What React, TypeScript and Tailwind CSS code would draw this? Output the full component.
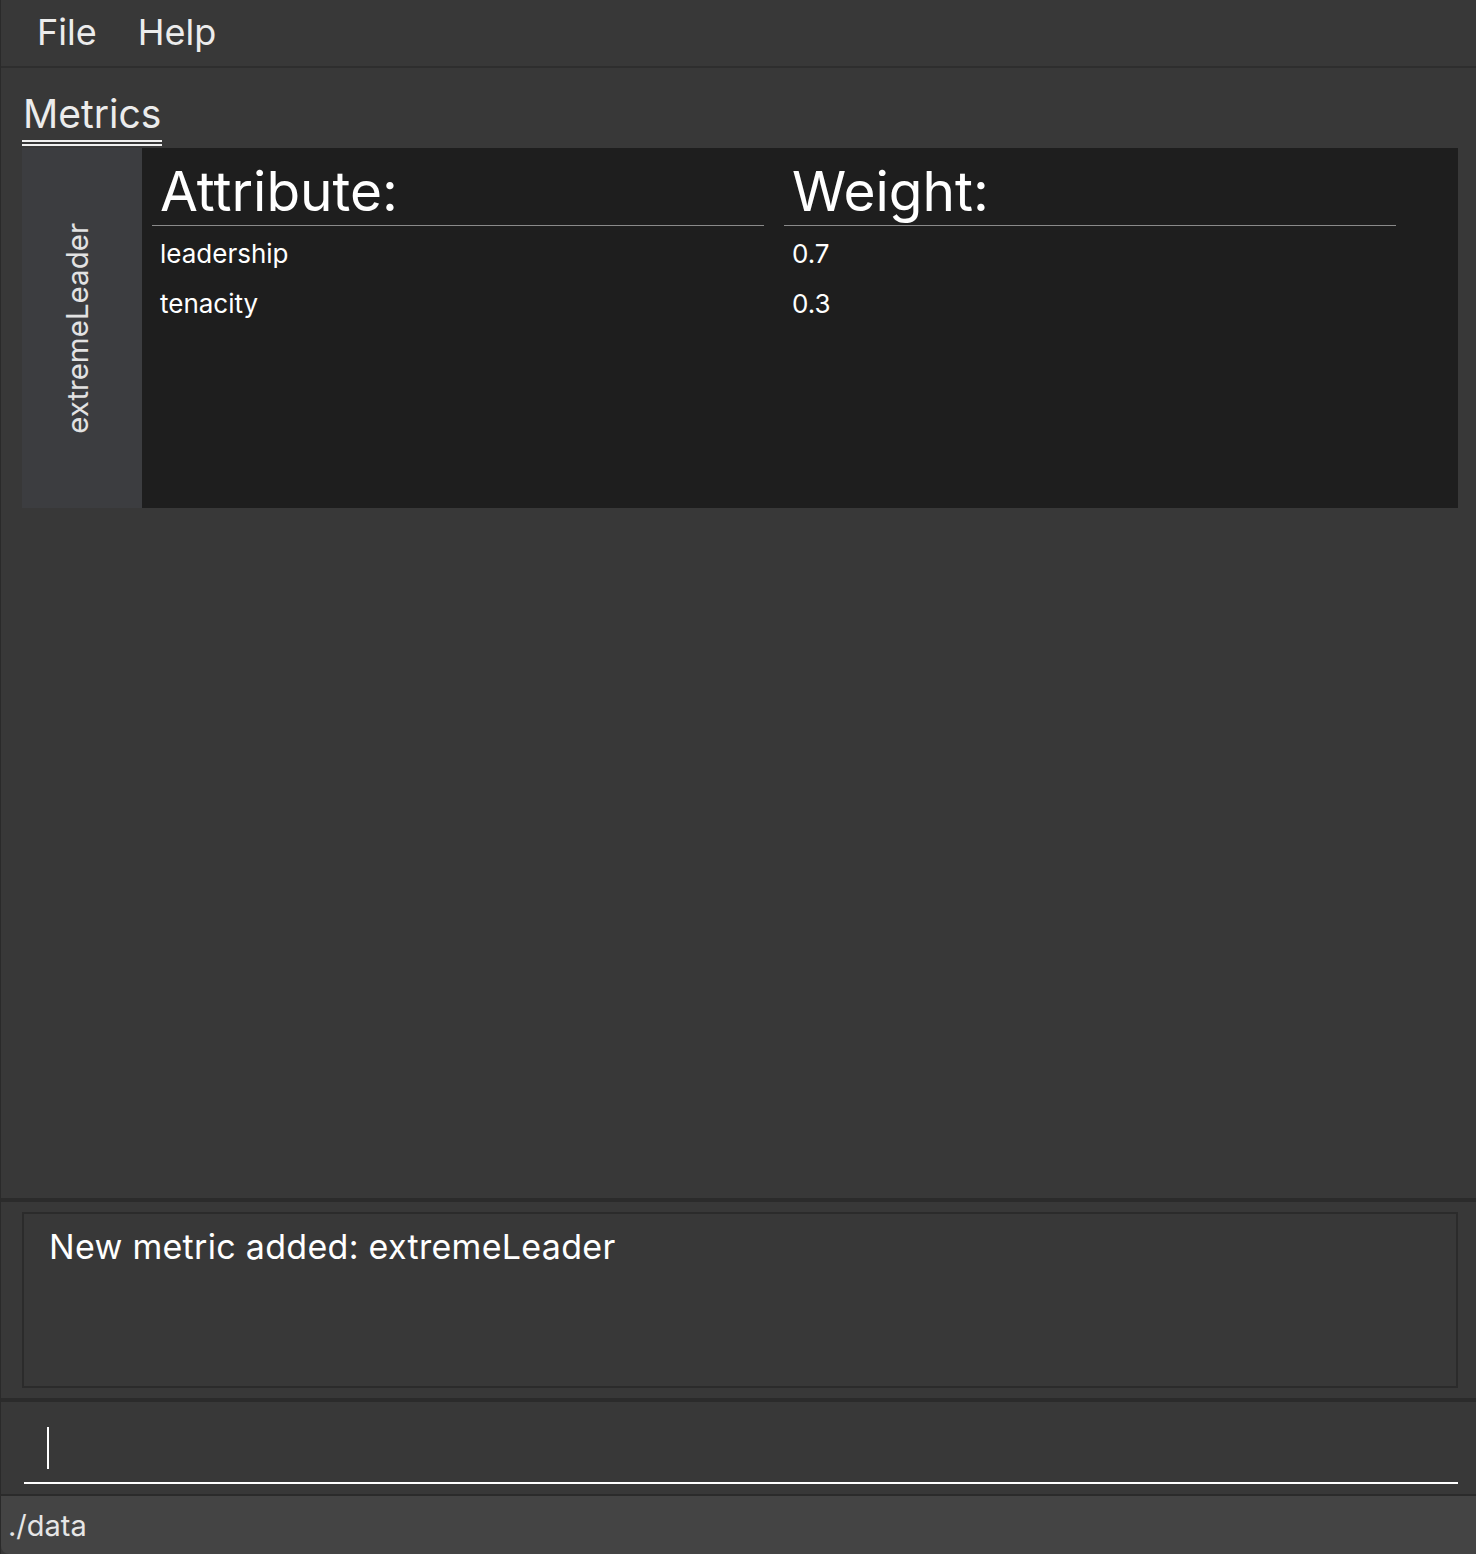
const rows = [
  { attr: 'leadership', weight: '0.7' },
  { attr: 'tenacity', weight: '0.3' },
];

const font = "font-['Inter','Liberation_Sans',sans-serif]";

export default function App() {
  return (
    <div className={`flex h-[1554px] w-[1476px] flex-col overflow-hidden border-l border-[#2a2a2a] bg-[#383838] ${font}`}>
      {/* menu bar */}
      <div className="flex h-[68px] shrink-0 items-center gap-[41px] border-b-2 border-[#2e2e2e] pb-[2px] pl-[36px] text-[36px] leading-none text-[#ececec]">
        <span>File</span>
        <span>Help</span>
      </div>

      {/* metrics list */}
      <div className="flex h-[1130px] shrink-0 flex-col pl-[21px] pr-[18px]">
        <div className="mt-[26px] self-start border-b-[6px] border-double border-[#f0f0f0] px-[1px] pb-[7px] text-[39px] leading-none text-[#ececec]">
          Metrics
        </div>
        <div className="mt-[2px] flex h-[360px]">
          <div className="flex w-[120px] shrink-0 items-center justify-center bg-[#3c3d40] pr-[8px]">
            <span className="rotate-180 text-[29.5px] leading-none text-[#e2e2e2] [writing-mode:vertical-rl]">
              extremeLeader
            </span>
          </div>
          <div className="flex flex-1 gap-[20px] bg-[#1e1e1e] pl-[10px] pt-4">
            {(['attr', 'weight'] as const).map((key) => (
              <div key={key} className="w-[612px]">
                <div className="border-b border-[#8a8a8a] pb-[6px] pl-[8px] text-[55px] leading-none text-white">
                  {key === 'attr' ? 'Attribute:' : 'Weight:'}
                </div>
                <div className="mt-[3px]">
                  {rows.map((r) => (
                    <div key={r.attr} className="h-[50px] pl-[8px] text-[26px] leading-[50px] text-white">
                      {r[key]}
                    </div>
                  ))}
                </div>
              </div>
            ))}
          </div>
        </div>
      </div>

      {/* result display */}
      <div className="h-[200px] shrink-0 border-t-4 border-[#2b2b2b] pb-[10px] pl-[21px] pr-[18px] pt-[10px]">
        <div className="h-full border-2 border-[#2b2b2b] pl-[25px] pt-[16px] text-[34px] leading-none tracking-[0.3px] text-white">
          New metric added: extremeLeader
        </div>
      </div>

      {/* command box */}
      <div className="flex h-[96px] shrink-0 flex-col border-t-4 border-[#2b2b2b] pb-[10px] pl-[23px] pr-[18px]">
        <div className="flex flex-1 items-start border-b-2 border-white pl-[23px] pt-[25px]">
          <div className="h-[42px] w-[2px] bg-white" />
        </div>
      </div>

      {/* status bar */}
      <div className="flex flex-1 items-center rounded-bl-lg border-t-2 border-[#2b2b2b] bg-[#444444] pl-[7px] text-[29px] leading-none text-[#e6e6e6]">
        ./data
      </div>
    </div>
  );
}
